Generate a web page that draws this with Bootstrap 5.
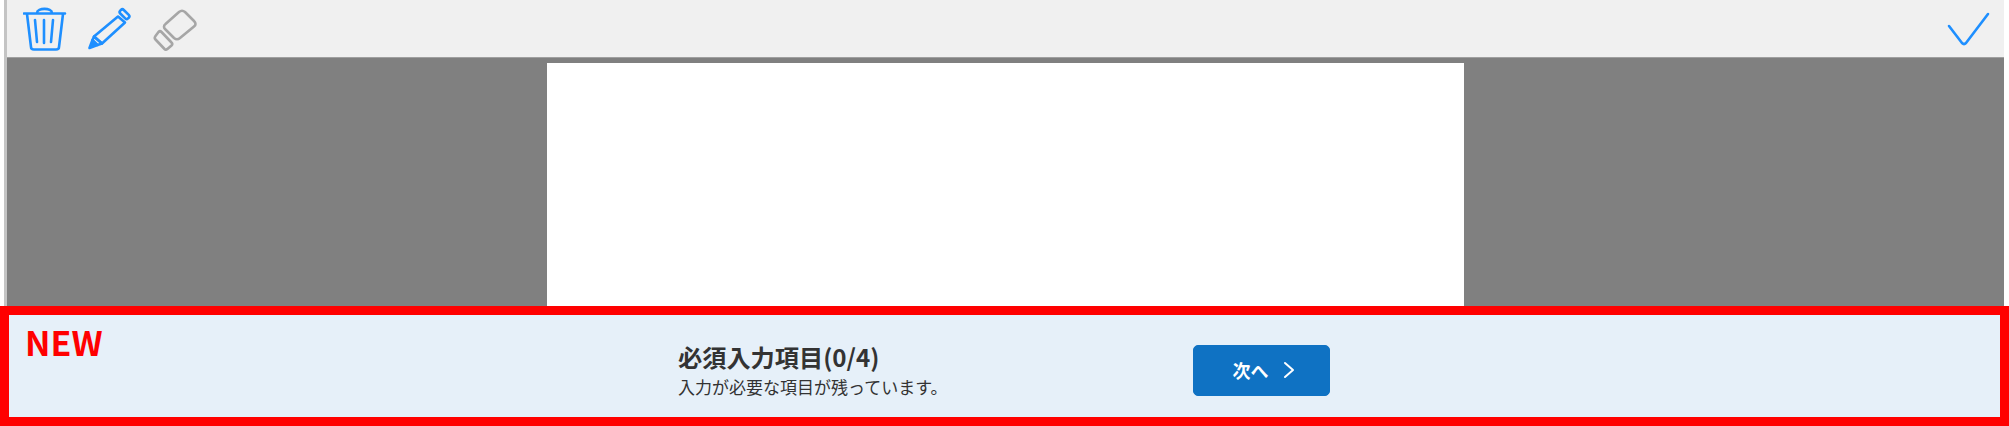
<!DOCTYPE html>
<html lang="ja">

<head>
    <meta charset="UTF-8">
    <meta name="viewport" content="width=device-width, initial-scale=1.0">
    <title>入力</title>

    <link href="https://cdn.jsdelivr.net/npm/bootstrap@5.3.0/dist/css/bootstrap.min.css" rel="stylesheet">

    <style>
        html,
        body {
            height: 426px;
            overflow: hidden;
        }

        body {
            background-color: #fff;
            font-family: "Noto Sans CJK JP", "Noto Sans", sans-serif;
        }

        /* ビューア部分 */
        .viewer {
            height: 306px;
            margin-left: 4px;
            margin-right: 5px;
            border-left: 3px solid #c4c4c4;
        }

        .tool-bar {
            height: 58px;
            background-color: #f0f0f0;
            border-bottom: 1px solid #a0a0a0;
            padding-left: 16px;
            padding-right: 14px;
        }

        .tool-icon {
            display: block;
            width: 44px;
            height: 44px;
            margin-right: 21px;
            fill: none;
            stroke: #1e8fff;
            stroke-width: 2.6;
            stroke-linecap: round;
            stroke-linejoin: round;
        }

        .tool-off {
            stroke: #a6a6a6;
        }

        .tip-fill {
            fill: #1e8fff;
        }

        .check-icon {
            width: 44px;
            height: 38px;
            margin-right: 0;
        }

        .sheet-area {
            height: 248px;
            background-color: #808080;
            padding-top: 5px;
        }

        .sheet {
            width: 917px;
            margin-left: 540px;
            background-color: #fff;
        }

        /* 赤枠のバナー */
        .banner {
            height: 120px;
            background-color: #e6f0f9;
            border: 9px solid #f00;
        }

        .new-label {
            width: 669px;
            padding-left: 16px;
            padding-top: 3px;
            color: #f00;
            font-size: 34px;
            line-height: 48px;
            font-weight: 700;
        }

        .req-text {
            width: 515px;
            margin-top: 7px;
            color: #333;
        }

        .req-title {
            font-size: 24.2px;
            line-height: 34px;
            font-weight: 700;
        }

        .req-sub {
            font-size: 17px;
            line-height: 25px;
        }

        .next-btn {
            width: 137px;
            height: 51px;
            margin-top: 8px;
            padding-left: 4px !important;
            background-color: #0f72c3;
            border-color: #0f72c3;
            color: #fff;
            font-size: 18px;
            font-weight: 700;
            border-radius: 5px;
            gap: 14px;
        }

        .next-btn:hover {
            background-color: #0f72c3;
            color: #fff;
        }
    </style>
</head>

<body>

    <div class="viewer">
        <!-- ツールバー -->
        <div class="tool-bar d-flex align-items-center">
            <svg class="tool-icon" viewBox="0 0 44 44">
                <path d="M1 6.5H42M14 6C14 0.5 29 0.5 29 6M4 7L8 40C8 42 9 42.5 11 42.5H33C35 42.5 36 42 36 40L40 7" />
                <path d="M12 13L14 35M21 13V36M30 13L28 35" />
            </svg>
            <svg class="tool-icon" viewBox="0 0 44 44">
                <path class="tip-fill" d="M1.5 41L4.5 33L9.5 38Z" />
                <path d="M4.5 33L6 29.5L14 36.5L9.5 38" />
                <path d="M6 29.5L30 9.5L37 15.5L14 36.5Z" />
                <rect x="-5.5" y="-2.5" width="11" height="5" rx="2" transform="translate(36.5 7.2) rotate(45)" />
            </svg>
            <svg class="tool-icon tool-off" viewBox="0 0 44 44">
                <path d="M26 5Q29 2.5 32 5L41 14Q44 17 41 19.5L27 31Q24 33.5 21 31L12.500 22.500Q9.500 19.500 12.500 17Z" />
                <path d="M5.500 25Q7 23.500 8.500 25L18.500 35.500Q20 37 18.500 38.500L15 41.500Q13 43.500 11.500 42L2.500 32.500Q1 31 2.500 29Z" />
            </svg>
            <svg class="tool-icon check-icon ms-auto" viewBox="0 0 44 38">
                <path d="M3 16L16 33Q18 35 20 33L42 4" />
            </svg>
        </div>

        <!-- 書類の表示領域 -->
        <div class="sheet-area d-flex">
            <div class="sheet"></div>
        </div>
    </div>

    <!-- 必須入力項目のバナー -->
    <div class="banner d-flex">
        <div class="new-label">NEW</div>
        <div class="req-text align-self-center">
            <div class="req-title">必須入力項目(0/4)</div>
            <div class="req-sub">入力が必要な項目が残っています。</div>
        </div>
        <button type="button" class="next-btn btn d-flex align-items-center justify-content-center align-self-center p-0">
            <span>次へ</span>
            <svg width="12" height="18" viewBox="0 0 12 18" fill="none" stroke="#fff" stroke-width="2" stroke-linecap="round" stroke-linejoin="round">
                <path d="M2 2L10 9L2 16" />
            </svg>
        </button>
    </div>

</body>

</html>
